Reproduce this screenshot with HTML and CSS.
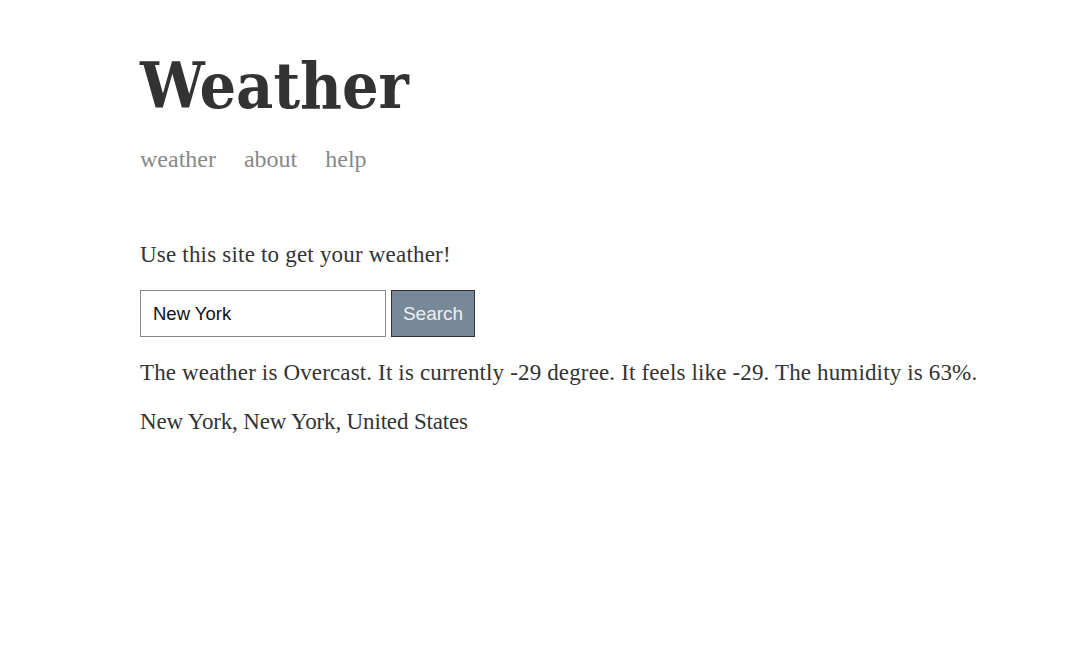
FILE: index.html
```html
<!DOCTYPE html>
<html>
<head>
<meta charset="utf-8">
<title>Weather</title>
<link rel="stylesheet" href="styles.css">
</head>
<body>
<div class="main">
  <header class="header">
    <h1 class="title">Weather</h1>
    <nav class="nav">
      <a class="nav-link" href="#">weather</a>
      <a class="nav-link" href="#">about</a>
      <a class="nav-link" href="#">help</a>
    </nav>
  </header>
  <p class="intro">Use this site to get your weather!</p>
  <form class="search">
    <input class="search-input" type="text" value="New York">
    <button class="search-btn" type="button">Search</button>
  </form>
  <p class="result">The weather is Overcast. It is currently -29 degree. It feels like -29. The humidity is 63%.</p>
  <p class="result location">New York, New York, United States</p>
</div>
</body>
</html>
```

FILE: styles.css
```css
html, body {
  margin: 0;
  padding: 0;
  background: #fff;
}
body {
  font-family: "Liberation Serif", serif;
  color: #333;
}
.main {
  padding: 40px 40px 0 140px;
}
.header {
  margin-bottom: 68px;
}
.title {
  font-family: "DejaVu Serif Condensed", "DejaVu Serif", serif;
  font-weight: bold;
  font-size: 64px;
  line-height: 64px;
  margin: 14px 0 28px;
  color: #333;
}
.nav {
  display: flex;
  gap: 28px;
}
.nav-link {
  color: #888;
  text-decoration: none;
  font-size: 24px;
  line-height: 27px;
}
.intro {
  font-size: 23px;
  line-height: 27px;
  margin: 0 0 22px;
  letter-spacing: 0.2px;
}
.search {
  display: flex;
  gap: 5px;
  margin-bottom: 22px;
}
.search-input {
  width: 246px;
  height: 47px;
  box-sizing: border-box;
  border: 1px solid #888;
  padding: 0 12px;
  font-family: "Liberation Sans", Arial, sans-serif;
  font-size: 18.5px;
  color: #111;
}
.search-btn {
  width: 84px;
  height: 47px;
  box-sizing: border-box;
  border: 1px solid #333;
  background: #778899;
  color: #f0f0f0;
  font-family: "Liberation Sans", Arial, sans-serif;
  font-size: 19px;
  padding: 0;
}
.result {
  font-size: 23px;
  line-height: 27px;
  margin: 0 0 22px;
  letter-spacing: 0.15px;
}
.location {
  letter-spacing: -0.15px;
}
```
